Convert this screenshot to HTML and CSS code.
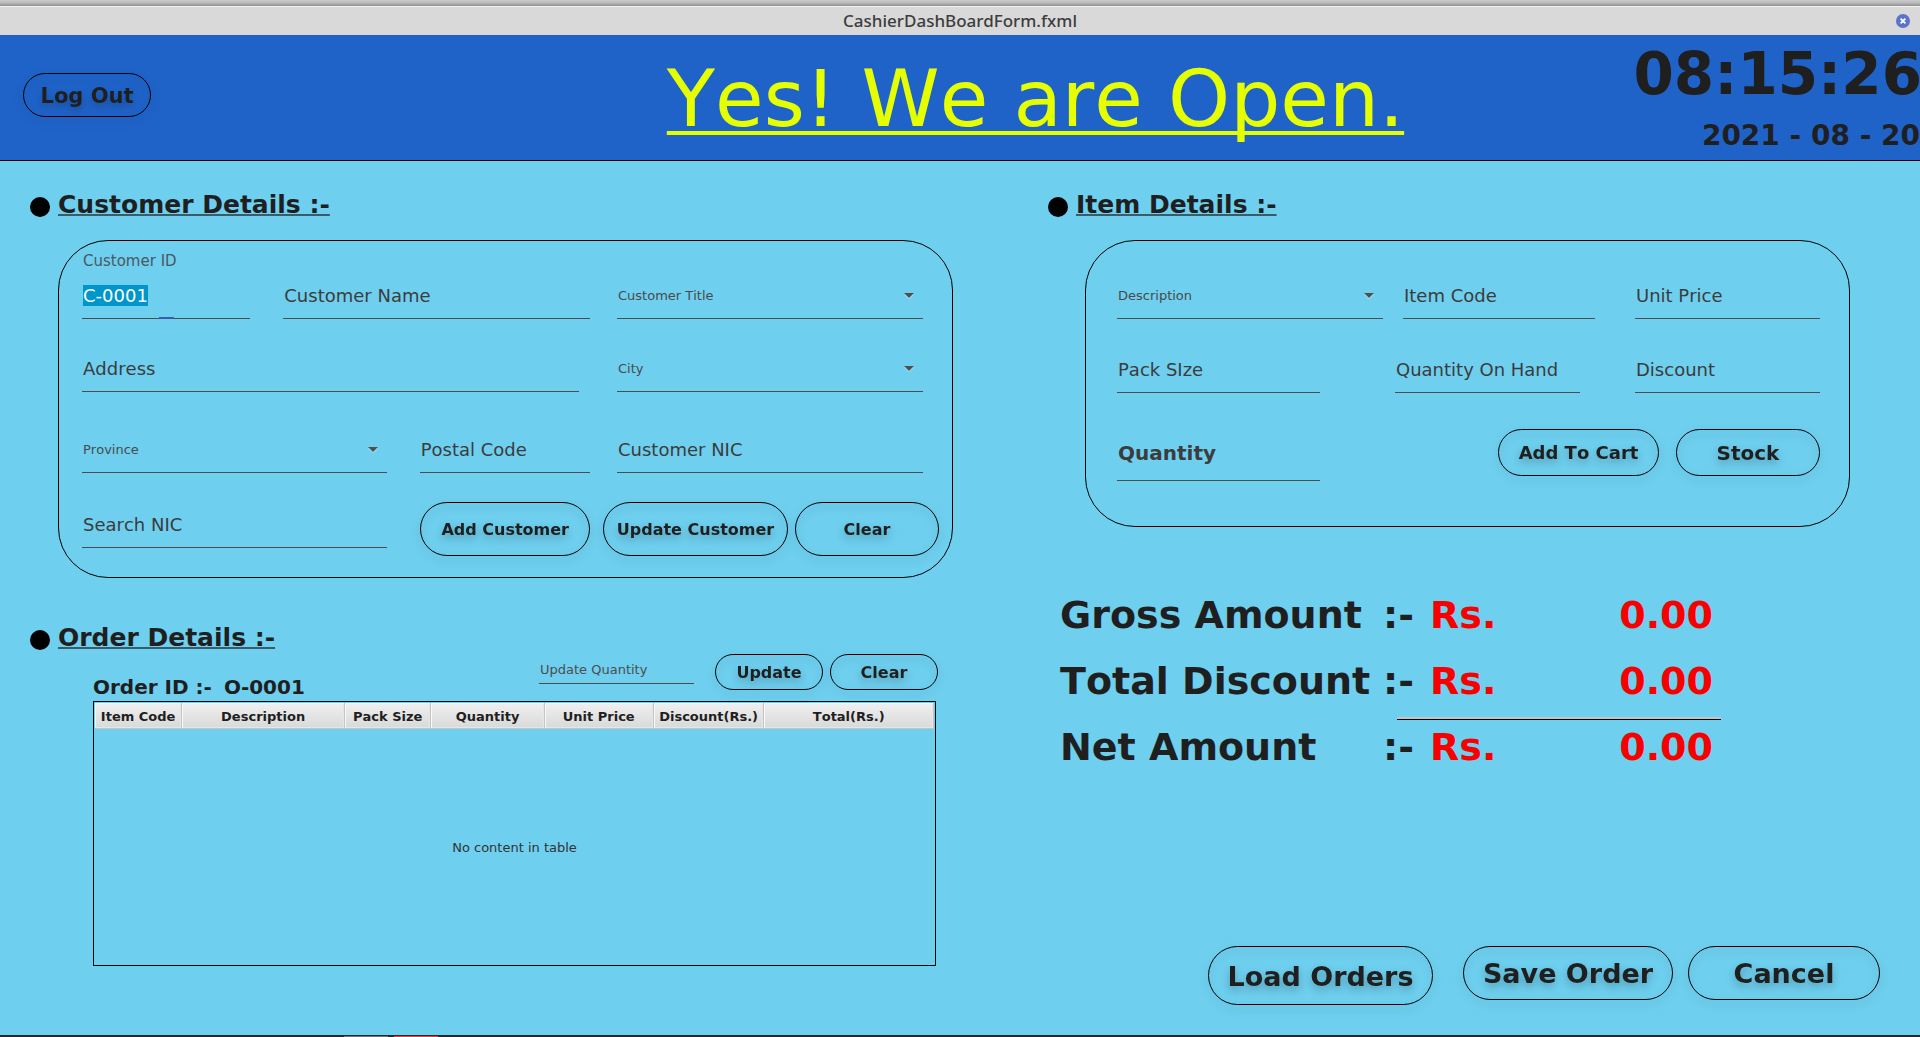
FILE: index.html
```html
<!DOCTYPE html>
<html lang="en">
<head>
<meta charset="utf-8">
<meta name="viewport" content="width=device-width, initial-scale=1">
<title>CashierDashBoardForm.fxml</title>
<link rel="stylesheet" href="styles.css">
</head>
<body>
<div class="titlebar">
  <span class="titlebar-text">CashierDashBoardForm.fxml</span>
  <button class="close" type="button" aria-label="Close window">
    <svg viewBox="0 0 14 14" width="14" height="14" aria-hidden="true"><circle cx="7" cy="7" r="7" fill="#5b74c9"/><path d="M4.6 4.6 9.4 9.4M9.4 4.6 4.6 9.4" stroke="#fff" stroke-width="1.8"/></svg>
  </button>
</div>

<header class="header">
  <div class="header-left"><button class="btn btn-logout" type="button">Log Out</button></div>
  <h1 class="banner">Yes! We are Open.</h1>
  <div class="clock">
    <time class="clock-time">08:15:26</time>
    <time class="clock-date" datetime="2021-08-20">2021 - 08 - 20</time>
  </div>
</header>

<main class="main">
  <div class="column">
    <h2 class="heading"><span class="bullet"></span><span class="heading-text">Customer Details :-</span></h2>
    <form class="panel panel-customer">
      <div class="row row-top">
        <div class="half">
          <div class="labelled">
            <label class="float-label" for="cust-id">Customer ID</label>
            <span class="focus-field"><input class="field" id="cust-id" type="text" value="C-0001"></span>
          </div>
          <input class="field wide" type="text" placeholder="Customer Name" aria-label="Customer Name">
        </div>
        <span class="select"><select class="field" aria-label="Customer Title"><option>Customer Title</option></select></span>
      </div>
      <div class="row row-address">
        <div class="half half-inset"><input class="field wide" type="text" placeholder="Address" aria-label="Address"></div>
        <span class="select"><select class="field" aria-label="City"><option>City</option></select></span>
      </div>
      <div class="row row-region">
        <div class="half">
          <span class="select wide"><select class="field" aria-label="Province"><option>Province</option></select></span>
          <input class="field narrow" type="text" placeholder="Postal Code" aria-label="Postal Code">
        </div>
        <input class="field" type="text" placeholder="Customer NIC" aria-label="Customer NIC">
      </div>
      <div class="row row-actions">
        <div class="half">
          <input class="field wide" type="text" placeholder="Search NIC" aria-label="Search NIC">
          <button class="btn btn-tall narrow" type="button">Add Customer</button>
        </div>
        <div class="pair">
          <button class="btn btn-tall" type="button">Update Customer</button>
          <button class="btn btn-tall" type="button">Clear</button>
        </div>
      </div>
    </form>

    <h2 class="heading heading-order"><span class="bullet"></span><span class="heading-text">Order Details :-</span></h2>
    <div class="order-bar">
      <p class="order-id"><span>Order ID :-</span><span>O-0001</span></p>
      <input class="field field-small" type="text" placeholder="Update Quantity" aria-label="Update Quantity">
      <button class="btn btn-short" type="button">Update</button>
      <button class="btn btn-short" type="button">Clear</button>
    </div>
    <div class="table-wrap">
      <table class="orders">
        <colgroup>
          <col class="c-code"><col class="c-desc"><col class="c-pack"><col class="c-qty"><col class="c-price"><col class="c-disc"><col class="c-total">
        </colgroup>
        <thead>
          <tr><th>Item Code</th><th>Description</th><th>Pack Size</th><th>Quantity</th><th>Unit Price</th><th>Discount(Rs.)</th><th>Total(Rs.)</th></tr>
        </thead>
        <tbody><tr><td colspan="7">No content in table</td></tr></tbody>
      </table>
    </div>
  </div>

  <div class="column">
    <h2 class="heading"><span class="bullet"></span><span class="heading-text">Item Details :-</span></h2>
    <form class="panel panel-item">
      <div class="item-row item-row-first">
        <span class="select"><select class="field" aria-label="Description"><option>Description</option></select></span>
        <div class="cell-code"><input class="field" type="text" placeholder="Item Code" aria-label="Item Code"></div>
        <input class="field" type="text" placeholder="Unit Price" aria-label="Unit Price">
      </div>
      <div class="item-row item-row-second">
        <input class="field" type="text" placeholder="Pack SIze" aria-label="Pack Size">
        <div class="cell-hand"><input class="field" type="text" placeholder="Quantity On Hand" aria-label="Quantity On Hand"></div>
        <input class="field" type="text" placeholder="Discount" aria-label="Discount">
      </div>
      <div class="item-row item-row-third">
        <input class="field field-bold" type="text" placeholder="Quantity" aria-label="Quantity">
        <button class="btn btn-cart" type="button">Add To Cart</button>
        <button class="btn btn-cart btn-stock" type="button">Stock</button>
      </div>
    </form>

    <section class="totals" aria-label="Totals">
      <div class="total"><span>Gross Amount</span><span>:-</span><span class="money"><span>Rs.</span><span>0.00</span></span></div>
      <div class="total"><span>Total Discount</span><span>:-</span><span class="money"><span>Rs.</span><span>0.00</span></span></div>
      <hr class="rule">
      <div class="total"><span>Net Amount</span><span>:-</span><span class="money"><span>Rs.</span><span>0.00</span></span></div>
    </section>

    <div class="actions">
      <button class="btn btn-big btn-load" type="button">Load Orders</button>
      <button class="btn btn-big btn-save" type="button">Save Order</button>
      <button class="btn btn-big btn-cancel" type="button">Cancel</button>
    </div>
  </div>
</main>
<div class="taskbar"></div>
<script src="script.js"></script>
</body>
</html>
```
FILE: styles.css
```css
* { box-sizing: border-box; }

body {
  margin: 0;
  min-height: 100vh;
  display: flex;
  flex-direction: column;
  background: #6ecfef;
  color: #1f1f1f;
  font-family: "DejaVu Sans", sans-serif;
  font-kerning: none;
  overflow-x: hidden;
}

/* Window title bar */
.titlebar {
  display: grid;
  grid-template-columns: 1fr auto 1fr;
  align-items: center;
  height: 35px;
  padding: 6px 10px 0 0;
  background: linear-gradient(#cdcdcd, #b9b9b9 3px, #8f8f8f 6px, #f4f4f4 6px, #f4f4f4 7px, #d9d9d9 7px);
}
.titlebar-text {
  grid-column: 2;
  padding-left: 10px;
  color: #3d3d3d;
  font: 500 17px/24px "Noto Sans", sans-serif;
}
.close {
  justify-self: end;
  display: flex;
  padding: 0;
  border: 0;
  background: none;
}

/* Header */
.header {
  display: grid;
  grid-template-columns: 667fr auto 516fr;
  align-items: center;
  height: 126px;
  background: #1f63c9;
  border-bottom: 1px solid #000;
}
.header-left { align-self: start; padding: 38px 0 0 23px; }
.banner {
  margin: 0;
  padding-top: 3px;
  color: #e6ff00;
  font-size: 79px;
  font-weight: 400;
  line-height: 94px;
  white-space: nowrap;
  text-decoration: underline 4px;
  text-underline-offset: 5px;
  text-decoration-skip-ink: none;
}
.clock {
  align-self: start;
  display: flex;
  flex-direction: column;
  align-items: flex-end;
  gap: 12px;
  padding-top: 5px;
  font-weight: 700;
  white-space: nowrap;
}
.clock-time { margin-right: -2px; font-size: 58px; line-height: 68px; }
.clock-date { font-size: 28px; line-height: 32px; }

/* Buttons */
.btn {
  padding: 0;
  border: 1px solid #000;
  border-radius: 30px;
  background: none;
  color: #1f1f1f;
  font-family: inherit;
  font-kerning: none;
  font-size: 16px;
  font-weight: 700;
  white-space: nowrap;
  filter: drop-shadow(0 4px 4px rgba(0, 0, 0, 0.26));
}
.btn-logout { width: 128px; height: 44px; padding-top: 2px; font-size: 21px; }
.btn-tall { height: 54px; }
.btn-short { width: 108px; height: 36px; }
.btn-cart { width: 161px; height: 47px; font-size: 18px; }
.btn-stock { width: 144px; font-size: 20px; }
.btn-big { height: 54px; font-size: 27px; }
.btn-load { width: 225px; height: 59px; margin-right: 15px; padding-top: 2px; }
.btn-save { width: 210px; }
.btn-cancel { width: 192px; }

/* Page body */
.main {
  flex: 1;
  display: grid;
  grid-template-columns: minmax(0, 923fr) minmax(0, 832fr);
  gap: 95px;
  padding: 29px 40px 30px 30px;
}
.column { display: flex; flex-direction: column; }

.heading {
  display: flex;
  align-items: flex-end;
  gap: 8px;
  margin: 0;
  font-size: 25px;
  line-height: 30px;
}
.heading-order { margin-top: 45px; }
.heading-text {
  text-decoration: underline 2px rgba(31, 31, 31, 0.65);
  text-underline-offset: 1px;
  text-decoration-skip-ink: none;
}
.bullet {
  width: 20px;
  height: 20px;
  margin-bottom: 3px;
  border-radius: 50%;
  background: #000;
}

.panel {
  margin-top: 20px;
  border: 1px solid #000;
  border-radius: 50px;
}

/* Fields */
.field {
  display: block;
  width: 100%;
  min-width: 0;
  height: 34px;
  padding: 0 1px 13px;
  border: 0;
  border-bottom: 1px solid #4d4d4d;
  border-radius: 0;
  outline: 0;
  appearance: none;
  background: none;
  color: #1f1f1f;
  font: 18px/22px "DejaVu Sans", sans-serif;
  font-kerning: none;
}
.field::placeholder { color: #3c3c3c; opacity: 1; }
.field::selection { background: #0096c9; color: #fff; }
.field-small { width: 155px; height: 24px; margin: 6px 14px 0 auto; padding-bottom: 4px; font-size: 13px; line-height: 18px; }
.field-small::placeholder { color: #4d4d4d; }
.field-bold { height: 40px; padding-bottom: 15px; font-size: 20px; line-height: 24px; font-weight: 700; }

.select { position: relative; display: block; }
.select .field { padding-bottom: 11px; color: #4a4a4a; font-size: 13px; }
.select::after {
  content: "";
  position: absolute;
  top: 8px;
  right: 9px;
  border: solid transparent;
  border-width: 5px 5px 0;
  border-top-color: #4f4f4f;
  filter: drop-shadow(0 1px 0 rgba(255, 255, 255, 0.5));
  pointer-events: none;
}
.focus-field { position: relative; display: block; }
.focus-field::after {
  content: "";
  position: absolute;
  left: 77px;
  bottom: 0;
  width: 15px;
  height: 2px;
  background: #4059a9;
}

/* Customer panel */
.panel-customer { margin-left: 28px; padding: 11px 29px 21px 23px; }
.row {
  display: grid;
  grid-template-columns: minmax(0, 508fr) minmax(0, 306fr);
  column-gap: 27px;
  align-items: end;
}
.half { display: flex; align-items: flex-end; gap: 33px; }
.half-inset { padding-right: 11px; }
.labelled { flex: 169 1 0; min-width: 0; display: flex; flex-direction: column; gap: 15px; }
.float-label { padding-left: 1px; color: #4a5960; font-size: 15px; line-height: 18px; white-space: nowrap; }
.wide { flex: 306 1 0; width: auto; }
.narrow { flex: 169 1 0; width: auto; }
.row-address { margin-top: 39px; }
.row-region { margin-top: 47px; }
.row-actions {
  grid-template-columns: minmax(0, 508fr) minmax(0, 336fr);
  column-gap: 13px;
  margin: 29px -16px 0 0;
}
.row-actions .field { margin-bottom: 8px; }
.pair { display: grid; grid-template-columns: 185fr 144fr; gap: 7px; }

/* Item panel */
.panel-item { margin-left: 37px; margin-right: 30px; padding: 44px 29px 45px 31px; }
.item-row { display: grid; }
.item-row-first { grid-template-columns: 266fr 212fr 185fr; gap: 20px; }
.item-row-second { grid-template-columns: 203fr 205fr 185fr; gap: 55px; margin-top: 40px; }
.item-row-third { grid-template-columns: 203fr auto auto; gap: 17px; margin-top: 36px; align-items: start; }
.cell-code { padding-right: 20px; }
.cell-hand { padding-left: 20px; }
.item-row-third .field { width: 203px; margin-top: 12px; }

/* Order area */
.order-bar { display: flex; align-items: flex-start; gap: 7px; margin: 1px 15px 2px 63px; }
.order-id { display: flex; gap: 12px; margin: 21px 0 0; font-size: 20px; font-weight: 700; line-height: 24px; }
.table-wrap { margin: 0 17px 0 63px; }
.orders {
  width: 100%;
  height: 265px;
  padding: 1px;
  border: 1px solid #000;
  border-spacing: 0;
  table-layout: fixed;
  font-size: 13px;
}
.c-code { width: 10.4%; }
.c-desc { width: 19.4%; }
.c-pack { width: 10.3%; }
.c-qty { width: 13.5%; }
.c-price { width: 13%; }
.c-disc { width: 13.2%; }
.c-total { width: 20.2%; }
.orders th {
  height: 26px;
  padding: 2px 0 0;
  border: solid #c4c4c4;
  border-width: 0 1px 1px 0;
  background: linear-gradient(#f0f0f0, #d9d9d9);
  box-shadow: inset 1px 1px #fafafa, inset -1px -1px #e6e6e6;
  white-space: nowrap;
}
.orders td { padding: 2px 0 0; color: #333; text-align: center; }

/* Totals */
.totals { margin: 66px 159px 0 12px; font-size: 38px; font-weight: 700; line-height: 44px; white-space: nowrap; }
.total { display: grid; grid-template-columns: 323fr 47fr 283fr; padding-right: 8px; }
.total + .total { margin-top: 22px; }
.money { display: flex; justify-content: space-between; color: #f80000; }
.rule {
  width: 49%;
  height: 3px;
  margin: 14px 0 5px auto;
  border: 0;
  background: linear-gradient(#c4c4c4 2px, #000 2px);
}

.actions { display: flex; justify-content: flex-end; align-items: flex-start; gap: 15px; margin-top: auto; }

/* Edge of the desktop panel under the window */
.taskbar {
  height: 2px;
  background:
    linear-gradient(#6f7173, #6f7173) 344px 1px / 44px 1px no-repeat,
    linear-gradient(#e8403f, #e8403f) 394px 1px / 44px 1px no-repeat,
    #262a2e;
}
```
FILE: script.js
```js
const customerId = document.getElementById("cust-id");
customerId.focus();
customerId.select();
```
